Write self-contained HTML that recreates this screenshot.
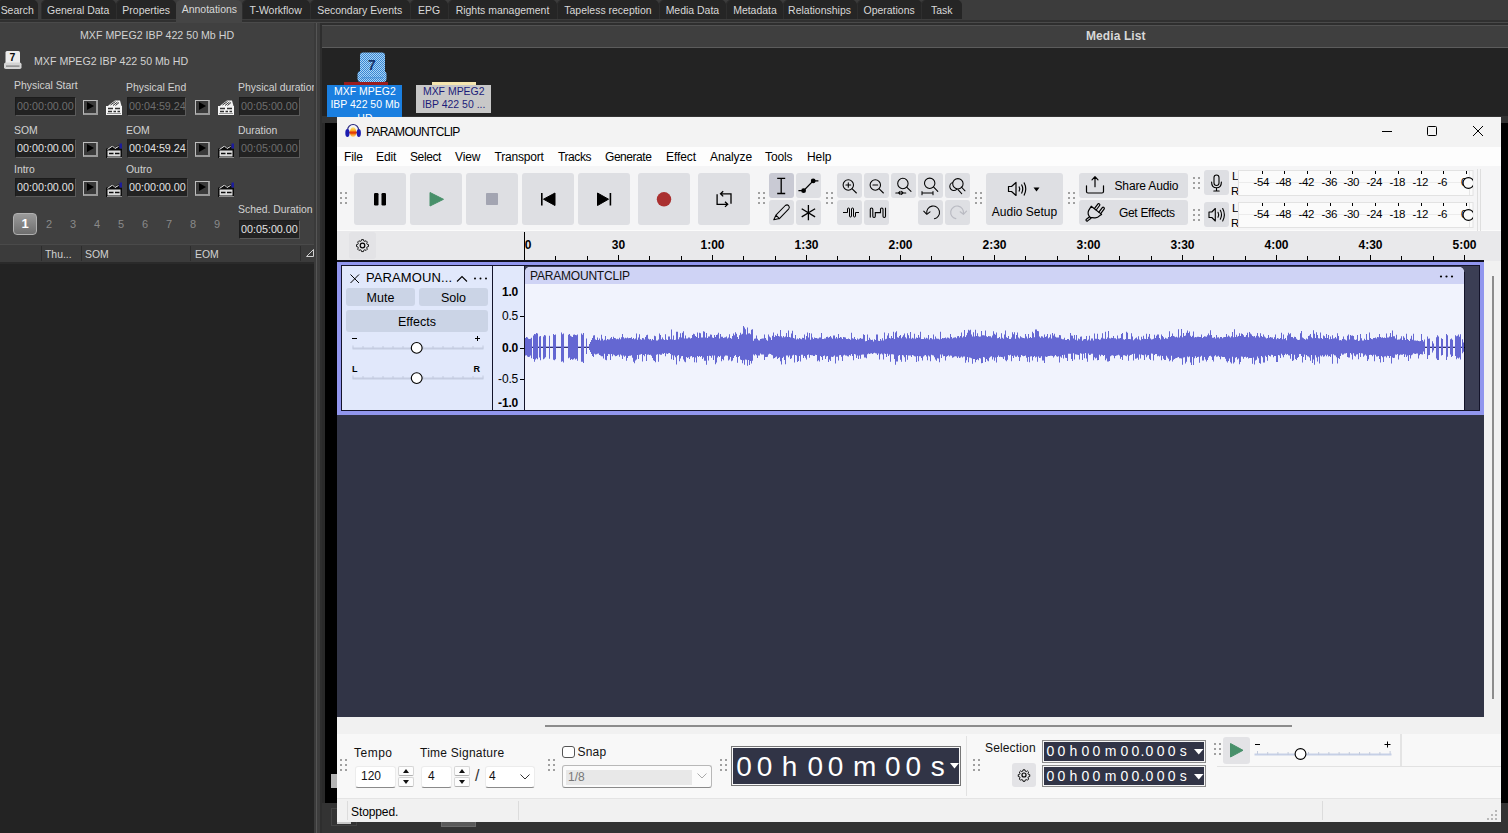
<!DOCTYPE html>
<html>
<head>
<meta charset="utf-8">
<title>PARAMOUNTCLIP</title>
<style>
*{box-sizing:border-box;margin:0;padding:0}
html,body{width:1508px;height:833px;overflow:hidden;background:#3f3f3f;font-family:"Liberation Sans",sans-serif;font-size:12px;color:#d6d6d6}
.abs{position:absolute}
#root{position:absolute;left:0;top:0;width:1508px;height:833px;overflow:hidden}
/* ---------- host app (dark) ---------- */
#tabbar{left:0;top:0;width:1508px;height:21px;background:#3c3c3c}
.tab{position:absolute;top:0;height:19px;background:#252525;border-radius:5px 5px 0 0;box-shadow:inset 1px 0 0 #2e2e2e;color:#d8d8d8;font-size:11.5px;line-height:20px;text-align:center;letter-spacing:0;white-space:nowrap}
.tab.sel{top:0;height:23px;background:#454545;line-height:19px;box-shadow:none}
#tabline{left:0;top:20px;width:1508px;height:3px;background:#303030;border-bottom:1px solid #4a4a4a}
#leftpanel{left:0;top:23px;width:316px;height:221px;background:#404040}
.lbl{position:absolute;font-size:11.5px;letter-spacing:0;transform:scaleX(.905);transform-origin:0 50%;color:#d2d2d2;white-space:nowrap;line-height:14px}
.tc{position:absolute;width:61px;height:19px;background:#222;border:1px solid #5a5a5a;border-top-color:#1c1c1c;border-left-color:#1c1c1c;color:#e2e2e2;font-size:11.5px;line-height:16px;letter-spacing:0;padding-left:1px;white-space:nowrap;overflow:hidden}
.tc.dis{color:#6e6e6e}
.pb{position:absolute;width:15px;height:15px;border:1.5px solid #bdbdbd;border-right:2px solid #999;border-bottom:2px solid #999;background:#3a3a3a}
.pb:after{content:"";position:absolute;left:2.5px;top:1.3px;border-left:7px solid #000;border-top:4.2px solid transparent;border-bottom:4.2px solid transparent}
.num{position:absolute;top:218px;font-size:11px;color:#8a8a8a;width:12px;text-align:center}
/* ---------- audacity window ---------- */
#win{left:337px;top:117px;width:1164px;height:705px;background:#f3f3f3;color:#000;overflow:hidden}
.seg{font-family:"Liberation Sans",sans-serif}
.menu{position:absolute;top:33px;font-size:12px;line-height:14px;color:#000;letter-spacing:-0.1px;white-space:nowrap}
.tbtn{position:absolute;background:#dedfe3;border-radius:3px}
.sbtn{position:absolute;background:#dedfe3;border-radius:3px;width:25px;height:25px}
.grip{position:absolute;width:2px;height:2px;background:#a0a0a0;box-shadow:5px 0 #a0a0a0,0 5px #a0a0a0,5px 5px #a0a0a0,0 10px #a0a0a0,5px 10px #a0a0a0}
.pbtn{background:#cbd4e6;border-radius:3px;text-align:center;font-size:12.5px;line-height:18px;color:#000}
.vr{left:155px;width:26px;text-align:right;font-size:12px;line-height:14px;letter-spacing:-0.2px;color:#000}
.vr.b{font-weight:bold}
.vr i{position:absolute;right:-6px;top:7px;width:4px;height:1px;background:#000}
.bl{font-size:12px;line-height:14px;color:#111;white-space:nowrap}
.inp{height:22px;background:#fff;border:1px solid #ececec;border-bottom-color:#8a8a8a;border-radius:3px;font-size:12px;line-height:19px;padding-left:5px;color:#111}
.spin{width:16px;height:22px}
.spin i,.spin b{position:absolute;left:0;width:16px;height:10px;border:1px solid #d6d6d6;border-bottom-color:#b0b0b0;background:#fdfdfd;border-radius:2px}
.spin i{top:0}.spin b{top:11px}
.spin i:after{content:"";position:absolute;left:4px;top:2px;border-left:3.5px solid transparent;border-right:3.5px solid transparent;border-bottom:4px solid #111}
.spin b:after{content:"";position:absolute;left:4px;top:2px;border-left:3.5px solid transparent;border-right:3.5px solid transparent;border-top:4px solid #111}
.selt{width:163px;height:22px;background:#313446;border:1px solid #111;outline:1px solid #fff;color:#fff;font-size:14px;line-height:20px;letter-spacing:3.1px;padding-left:4px;white-space:nowrap}
.sc{display:inline-block;transform:scaleX(.91);transform-origin:50% 50%}
.sl{display:inline-block;transform:scaleX(.935);transform-origin:0 50%}
.bigt span{position:absolute;top:0;width:30px;text-align:center;font-size:28px;line-height:37px;color:#fff}
.selo{width:164px;height:22.500px;border:1px solid #8c8c8c;background:#f6f6f6;padding:1px}
.seli{position:relative;width:160px;height:18.500px;background:#313446}
.seli span{position:absolute;top:0;width:16px;text-align:center;font-size:14px;line-height:19.500px;color:#fff}
</style>
</head>
<body>
<div id="root">
<!--HOST-->
<svg width="0" height="0" style="position:absolute"><defs><g id="clap"><path d="M0 6H16V15H0Z" fill="#f4f4f4"/><path d="M3 5L9 0.500H14L15.500 6H2Z" fill="#f4f4f4"/><path d="M4.500 5L9.500 1.500M7 5.500L11.500 2M9.500 5.500L13 2.500" stroke="#333" stroke-width="1"/><path d="M2 8.500H7M9 8.500H14M2 11.500H6M7.500 11.500H10M11.500 11.500H14" stroke="#333" stroke-width="1.300"/><path d="M1 13.500H15" stroke="#999" stroke-width="1"/></g><g id="clap2"><path d="M0 6.500H3L6.500 3L9 5.500L12 3.500H13.500V6.500H16V16H0Z" fill="#0c0c0c"/><rect x="1.500" y="8.500" width="13" height="6" fill="#dcdcdc"/><path d="M3 11.500H7.500M9 11.500H13.500" stroke="#0c0c0c" stroke-width="1.600"/><path d="M1.500 7.500L6.500 4L9 6.500L12.500 4.500" stroke="#e8e8e8" stroke-width="1" fill="none"/><rect x="13.500" y="1.500" width="2.500" height="5" fill="#1c1c9c"/><path d="M1 15.500H16" stroke="#8a8a8a"/></g></defs></svg>
<div class="abs" id="tabbar"></div>
<div class="tab" style="left:-3px;width:41px"><span class="sc">Search</span></div>
<div class="tab" style="left:41px;width:75px"><span class="sc">General Data</span></div>
<div class="tab" style="left:116px;width:60px"><span class="sc">Properties</span></div>
<div class="tab" style="left:242px;width:68px"><span class="sc">T-Workflow</span></div>
<div class="tab" style="left:310px;width:100px"><span class="sc">Secondary Events</span></div>
<div class="tab" style="left:410px;width:38px"><span class="sc">EPG</span></div>
<div class="tab" style="left:448px;width:109px"><span class="sc">Rights management</span></div>
<div class="tab" style="left:557px;width:102px"><span class="sc">Tapeless reception</span></div>
<div class="tab" style="left:659px;width:67px"><span class="sc">Media Data</span></div>
<div class="tab" style="left:726px;width:57px"><span class="sc">Metadata</span></div>
<div class="tab" style="left:783px;width:74px"><span class="sc">Relationships</span></div>
<div class="tab" style="left:857px;width:65px"><span class="sc">Operations</span></div>
<div class="tab" style="left:921px;width:41px"><span class="sc">Task</span></div>
<div class="abs" id="tabline"></div>
<div class="tab sel" style="left:176px;width:66px"><span class="sc">Annotations</span></div>

<div class="abs" id="leftpanel"></div>
<div class="lbl" style="left:79.500px;top:28px;transform:scaleX(.925)">MXF MPEG2 IBP 422 50 Mb HD</div>
<!-- small 7 icon -->
<svg class="abs" style="left:3px;top:50px" width="20" height="20" viewBox="0 0 20 20"><rect x="2.500" y="1" width="14.500" height="13" rx="1.500" fill="#ececec"/><rect x="1" y="12.500" width="17.500" height="6.500" rx="1.800" fill="#d4d4d4"/><rect x="3" y="15.500" width="13.500" height="1.200" fill="#7a7a7a"/><text x="9.500" y="11.200" font-family="Liberation Sans, sans-serif" font-size="10.500" font-weight="bold" text-anchor="middle" fill="#0a0a0a">7</text></svg>
<div class="lbl" style="left:34px;top:54px;transform:scaleX(.925)">MXF MPEG2 IBP 422 50 Mb HD</div>

<div class="lbl" style="left:14px;top:78px">Physical Start</div>
<div class="lbl" style="left:126px;top:80px">Physical End</div>
<div class="lbl" style="left:238px;top:80px">Physical duration</div>
<div class="tc dis" style="left:15px;top:97px"><span class="sl">00:00:00.00</span></div><div class="pb" style="left:83px;top:100px"></div><svg class="abs" style="left:106px;top:100px" width="16" height="16"><use href="#clap"/></svg>
<div class="tc dis" style="left:127px;top:97px;width:59px"><span class="sl">00:04:59.24</span></div><div class="pb" style="left:195px;top:100px"></div><svg class="abs" style="left:218px;top:100px" width="16" height="16"><use href="#clap"/></svg>
<div class="tc dis" style="left:239px;top:97px"><span class="sl">00:05:00.00</span></div>

<div class="lbl" style="left:14px;top:123px">SOM</div>
<div class="lbl" style="left:126px;top:123px">EOM</div>
<div class="lbl" style="left:238px;top:123px">Duration</div>
<div class="tc" style="left:15px;top:139px"><span class="sl">00:00:00.00</span></div><div class="pb" style="left:83px;top:142px"></div><svg class="abs" style="left:106px;top:142px" width="16" height="16"><use href="#clap2"/></svg>
<div class="tc" style="left:127px;top:139px"><span class="sl">00:04:59.24</span></div><div class="pb" style="left:195px;top:142px"></div><svg class="abs" style="left:218px;top:142px" width="16" height="16"><use href="#clap2"/></svg>
<div class="tc dis" style="left:239px;top:139px"><span class="sl">00:05:00.00</span></div>

<div class="lbl" style="left:14px;top:162px">Intro</div>
<div class="lbl" style="left:126px;top:162px">Outro</div>
<div class="tc" style="left:15px;top:178px"><span class="sl">00:00:00.00</span></div><div class="pb" style="left:83px;top:181px"></div><svg class="abs" style="left:106px;top:181px" width="16" height="16"><use href="#clap2"/></svg>
<div class="tc" style="left:127px;top:178px"><span class="sl">00:00:00.00</span></div><div class="pb" style="left:195px;top:181px"></div><svg class="abs" style="left:218px;top:181px" width="16" height="16"><use href="#clap2"/></svg>

<div class="lbl" style="left:238px;top:202px">Sched. Duration</div>
<div class="tc" style="left:239px;top:220px"><span class="sl">00:05:00.00</span></div>

<div class="abs" style="left:13px;top:213px;width:24px;height:22px;border-radius:4px;background:linear-gradient(#9a9a9a,#6e6e6e);border:1px solid #b0b0b0;color:#fff;font-weight:bold;font-size:13px;text-align:center;line-height:20px">1</div>
<div class="num" style="left:43px">2</div><div class="num" style="left:67px">3</div><div class="num" style="left:91px">4</div><div class="num" style="left:115px">5</div><div class="num" style="left:139px">6</div><div class="num" style="left:163px">7</div><div class="num" style="left:187px">8</div><div class="num" style="left:211px">9</div>

<!-- list header -->
<div class="abs" style="left:0;top:244px;width:316px;height:20px;background:#3b3b3b;border-top:1px solid #4a4a4a;border-bottom:2px solid #2a2a2a"></div>
<div class="abs" style="left:41px;top:246px;width:1px;height:15px;background:#2c2c2c"></div>
<div class="abs" style="left:81px;top:246px;width:1px;height:15px;background:#2c2c2c"></div>
<div class="abs" style="left:190px;top:246px;width:1px;height:15px;background:#2c2c2c"></div>
<div class="abs" style="left:300px;top:246px;width:1px;height:15px;background:#2c2c2c"></div>
<svg class="abs" style="left:306px;top:248px" width="9" height="10" fill="none" stroke="#cfcfcf" stroke-width="1"><path d="M0.500 8.500L7.500 1.500V8.500Z"/></svg>
<div class="lbl" style="left:45px;top:247px">Thu...</div>
<div class="lbl" style="left:85px;top:247px">SOM</div>
<div class="lbl" style="left:195px;top:247px">EOM</div>
<div class="abs" style="left:0;top:264px;width:316px;height:569px;background:#232323"></div>
<!-- divider -->
<div class="abs" style="left:314px;top:23px;width:8px;height:810px;background:#3d3d3d;border-left:2px solid #3a3a3a;border-right:2px solid #2e2e2e"></div><div class="abs" style="left:316px;top:23px;width:1px;height:810px;background:#555"></div>

<!-- media list -->
<div class="abs" style="left:322px;top:23px;width:1186px;height:2px;background:#2e2e2e"></div><div class="abs" style="left:322px;top:25px;width:1186px;height:23px;background:#3f3f3f;border-top:1px solid #525252;border-bottom:1px solid #5c5c5c"></div>
<div class="abs" style="left:1086px;top:29px;font-size:12px;font-weight:bold;color:#d8d8d8;letter-spacing:0.1px;line-height:14px">Media List</div>
<div class="abs" style="left:322px;top:48px;width:1186px;height:785px;background:#232323"></div>
<div class="abs" style="left:322px;top:116px;width:1186px;height:7px;background:#333"></div>
<div class="abs" style="left:322px;top:123px;width:1186px;height:680px;background:#000"></div>
<div class="abs" style="left:322px;top:803px;width:1186px;height:30px;background:#333"></div>

<div class="abs" style="left:441px;top:818px;width:35px;height:9px;background:#5a5a5a;border:1px solid #6a6a6a"></div>
<div class="abs" style="left:322px;top:123px;width:3px;height:680px;background:#2a2a2a"></div>
<div class="abs" style="left:331px;top:774px;width:6px;height:14px;background:#b4b4b4"></div>
<div class="abs" style="left:331px;top:808px;width:26px;height:18px;border:1px solid #444"></div>
<div class="abs" style="left:337px;top:822px;width:14px;height:2px;background:#c8c8c8"></div>
<!-- media items -->
<svg class="abs" style="left:356px;top:52px" width="32" height="31" viewBox="0 0 32 31">
<defs><pattern id="dth" width="2" height="2" patternUnits="userSpaceOnUse"><rect width="2" height="2" fill="#a8d4f6"/><rect width="1" height="1" fill="#3a86d2"/><rect x="1" y="1" width="1" height="1" fill="#3a86d2"/></pattern></defs>
<rect x="4" y="0.500" width="25" height="22" rx="3" fill="url(#dth)"/><rect x="1.500" y="19" width="29" height="11" rx="3.500" fill="url(#dth)"/><rect x="5" y="25" width="22" height="1.500" fill="#3a86d2" opacity=".5"/>
<text x="16" y="18" font-family="Liberation Sans, sans-serif" font-size="14" font-weight="bold" text-anchor="middle" fill="#15356c">7</text></svg>
<div class="abs" style="left:344px;top:82px;width:44px;height:3px;background:#9a1c1c"></div>
<div class="abs" style="left:327px;top:85px;width:75px;height:32px;background:#1a7fe0;color:#fff;font-size:11.5px;line-height:13.4px;text-align:center;overflow:hidden;white-space:nowrap"><span class="sc">MXF MPEG2<br>IBP 422 50 Mb<br>HD</span></div>
<div class="abs" style="left:432px;top:82px;width:44px;height:3px;background:#f5e6b0"></div>
<div class="abs" style="left:416px;top:85px;width:75px;height:28px;background:#c8c8c8;color:#1c1c78;font-size:11.5px;line-height:13.4px;text-align:center;overflow:hidden;white-space:nowrap"><span class="sc">MXF MPEG2<br>IBP 422 50 ...</span></div>
<!--/HOST-->
<!--WIN-->
<div class="abs" id="win">
<!-- title bar -->
<div class="abs" style="left:0;top:0;width:1164px;height:30px;background:#f3f3f3"></div>
<svg class="abs" style="left:8px;top:6px" width="17" height="15" viewBox="0 0 17 15">
<defs><linearGradient id="aw" x1="0" y1="0" x2="0" y2="1"><stop offset="0" stop-color="#fbe67a"/><stop offset="0.35" stop-color="#f9a825"/><stop offset="0.55" stop-color="#e23c0c"/><stop offset="0.72" stop-color="#f58a1c"/><stop offset="1" stop-color="#fbe9a0"/></linearGradient></defs>
<path d="M2.600 8.500V7A5.500 5.500 0 0 1 13.600 7V8.500" fill="none" stroke="#23237c" stroke-width="1.200"/>
<ellipse cx="8.100" cy="9.200" rx="3.200" ry="4.900" fill="url(#aw)"/><rect x="4" y="8.700" width="8.200" height="1.700" fill="#e23c0c"/>
<ellipse cx="2.400" cy="9.900" rx="2.100" ry="4" fill="#1c1cb0"/><ellipse cx="13.800" cy="9.900" rx="2.100" ry="4" fill="#1c1cb0"/>
</svg>
<div class="abs" style="left:29px;top:8px;font-size:12px;line-height:14px;letter-spacing:-0.68px;color:#000">PARAMOUNTCLIP</div>
<svg class="abs" style="left:1040px;top:7.300px" width="120" height="14" viewBox="0 0 120 14" fill="none" stroke="#000" stroke-width="1"><path d="M5 7.5H15"/><rect x="50.5" y="2.5" width="9" height="9" rx="1"/><path d="M96 2 L106 12 M106 2 L96 12"/></svg>
<!-- menu bar -->
<div class="abs" style="left:0;top:30px;width:1164px;height:19px;background:#fdfdfd"></div>
<div class="menu" style="left:7px">File</div>
<div class="menu" style="left:39px">Edit</div>
<div class="menu" style="left:73px;letter-spacing:-0.4px">Select</div>
<div class="menu" style="left:118px">View</div>
<div class="menu" style="left:157.500px;letter-spacing:-0.2px">Transport</div>
<div class="menu" style="left:221px;letter-spacing:-0.4px">Tracks</div>
<div class="menu" style="left:268px;letter-spacing:-0.45px">Generate</div>
<div class="menu" style="left:329px">Effect</div>
<div class="menu" style="left:373px">Analyze</div>
<div class="menu" style="left:428px">Tools</div>
<div class="menu" style="left:470px">Help</div>
<!-- toolbar -->
<div class="abs" style="left:0;top:49px;width:1164px;height:64px;background:#f5f5f6"></div>
<div class="abs" style="left:0;top:113px;width:1164px;height:1px;background:#fbfbfb"></div>
<div class="grip" style="left:2.500px;top:75px"></div>
<div class="tbtn" style="left:17px;top:56px;width:52px;height:52px"><svg width="52" height="52"><rect x="20" y="20" width="4.5" height="12.5" rx="1.2" fill="#000"/><rect x="27.5" y="20" width="4.5" height="12.5" rx="1.2" fill="#000"/></svg></div>
<div class="tbtn" style="left:73px;top:56px;width:52px;height:52px"><svg width="52" height="52"><path d="M20 19.5 L33.5 26.3 L20 33 Z" fill="#48906a" stroke="#48906a" stroke-width="1" stroke-linejoin="round"/></svg></div>
<div class="tbtn" style="left:129px;top:56px;width:52px;height:52px"><svg width="52" height="52"><rect x="20" y="20" width="12" height="12" rx="0.8" fill="#a3a5b2"/></svg></div>
<div class="tbtn" style="left:185px;top:56px;width:52px;height:52px"><svg width="52" height="52"><rect x="19" y="20" width="1.6" height="12.5" fill="#000"/><path d="M33 20 V32.5 L21.5 26.2 Z" fill="#000" stroke="#000" stroke-width="1" stroke-linejoin="round"/></svg></div>
<div class="tbtn" style="left:241px;top:56px;width:52px;height:52px"><svg width="52" height="52"><rect x="31.6" y="20" width="1.6" height="12.5" fill="#000"/><path d="M19.5 20 V32.5 L30.5 26.2 Z" fill="#000" stroke="#000" stroke-width="1" stroke-linejoin="round"/></svg></div>
<div class="tbtn" style="left:301px;top:56px;width:52px;height:52px"><svg width="52" height="52"><circle cx="26" cy="26.3" r="7.2" fill="#aa3030"/></svg></div>
<div class="tbtn" style="left:361px;top:56px;width:52px;height:52px"><svg width="52" height="52" fill="none" stroke="#000" stroke-width="1.3"><path d="M33 30.800V20.800H22.600M25.200 18.200L22.500 20.800L25.200 23.400"/><path d="M19.100 21.300V31.300H29.500M27 28.700L29.700 31.300L27 33.900"/></svg></div>
<div class="grip" style="left:421px;top:75px"></div>
<!-- tools -->
<div class="sbtn" style="left:432px;top:56px;background:#c9cad4"><svg width="25" height="25" fill="none" stroke="#000" stroke-width="1.3"><path d="M8.200 5.300H16.200M8.200 20.500H16.200M12.200 5.300V20.500"/></svg></div>
<div class="sbtn" style="left:459px;top:56px"><svg width="25" height="25" fill="none" stroke="#000" stroke-width="1.3"><path d="M2.400 17.700H7.600L17.200 7.900H22.400"/><circle cx="7.600" cy="17.700" r="2.400" fill="#000" stroke="none"/><circle cx="17.200" cy="7.900" r="2.400" fill="#000" stroke="none"/></svg></div>
<div class="sbtn" style="left:432px;top:83px"><svg width="25" height="25" fill="none" stroke="#000" stroke-width="1.05" stroke-linecap="round" stroke-linejoin="round"><path d="M4.800 19.800L6.900 15.200L16.300 5.500Q18.200 4.200 19.600 5.600Q21 7.200 19.800 8.800L10.400 18.600ZM6.900 15.200L10.400 18.600"/></svg></div>
<div class="sbtn" style="left:459px;top:83px"><svg width="25" height="25" fill="none" stroke="#000" stroke-width="1.3"><path d="M12.400 5V20.200M5.700 8.800L19.100 16.900M19.100 8.800L5.700 16.900"/></svg></div>
<div class="grip" style="left:489px;top:75px"></div>
<!-- zoom -->
<div class="sbtn" style="left:500px;top:56px"><svg width="25" height="25" fill="none" stroke="#000" stroke-width="1.05" stroke-linecap="round" stroke-linejoin="round"><circle cx="11.300" cy="12" r="5.200"/><path d="M15.200 15.900L19.400 20M8.900 12H13.700M11.300 9.800V14.200"/></svg></div>
<div class="sbtn" style="left:527px;top:56px"><svg width="25" height="25" fill="none" stroke="#000" stroke-width="1.05" stroke-linecap="round" stroke-linejoin="round"><circle cx="11.300" cy="12" r="5.200"/><path d="M15.200 15.900L19.400 20M8.900 12H13.700"/></svg></div>
<div class="sbtn" style="left:554px;top:56px"><svg width="25" height="25" fill="none" stroke="#000" stroke-width="1.05" stroke-linecap="round" stroke-linejoin="round"><circle cx="11.900" cy="10.500" r="5.200"/><path d="M15.900 14.300L20 18.400M4.800 19.900H14.800M7.300 19.900l1.800-1.500M7.300 19.900l1.800 1.500M12.300 19.900l-1.800-1.500M12.300 19.900l-1.800 1.500"/></svg></div>
<div class="sbtn" style="left:581px;top:56px"><svg width="25" height="25" fill="none" stroke="#000" stroke-width="1.05" stroke-linecap="round" stroke-linejoin="round"><circle cx="11.700" cy="10.300" r="5.200"/><path d="M15.700 14.100L19.800 18.400M4 20H15M4 18.400V21.700M15 18.400V21.700"/></svg></div>
<div class="sbtn" style="left:608px;top:56px"><svg width="25" height="25" fill="none" stroke="#000" stroke-width="1.05" stroke-linecap="round" stroke-linejoin="round"><circle cx="8.800" cy="13.500" r="4"/><circle cx="12.900" cy="10.800" r="5.200" fill="#dedfe3"/><path d="M16.400 14L20 17.800M13 16.600L16.700 20.600"/></svg></div>
<div class="sbtn" style="left:500px;top:83px"><svg width="25" height="25" fill="none" stroke="#000" stroke-width="1"><path d="M6 12.500H10.500V9A1 1 0 0 1 12.500 9V16A1 1 0 0 0 14.500 16V9A1 1 0 0 1 16.500 9V16A1 1 0 0 0 18.500 16V12.500H22"/></svg></div>
<div class="sbtn" style="left:527px;top:83px"><svg width="25" height="25" fill="none" stroke="#000" stroke-width="1.1"><path d="M6.300 17.400V9.200A1.250 1.250 0 0 1 8.800 9.200V16.200A1.250 1.250 0 0 0 11.300 16.200V12.600H16.500V9.200A1.250 1.250 0 0 1 19 9.200V16.200A1.250 1.250 0 0 0 21.500 16.200V7.800"/></svg></div>
<div class="sbtn" style="left:581px;top:83px"><svg width="25" height="25" fill="none" stroke="#000" stroke-width="1.05" stroke-linecap="round" stroke-linejoin="round"><path d="M8.800 13.500A6.400 6.400 0 1 1 16.400 18.700"/><path d="M5.700 11.200L8.800 14.300L12 11.800"/></svg></div>
<div class="sbtn" style="left:608px;top:83px"><svg width="25" height="25" fill="none" stroke="#b9bac2" stroke-width="1.2" stroke-linecap="round" stroke-linejoin="round"><path d="M18.400 13.500A6.400 6.400 0 1 0 10.800 18.700"/><path d="M21.500 11.200L18.400 14.300L15.200 11.800"/></svg></div>
<div class="grip" style="left:638px;top:75px"></div>
<!-- audio setup -->
<div class="tbtn" style="left:649px;top:56px;width:77px;height:52px"><svg class="abs" style="left:20px;top:5px" width="40" height="22" fill="none" stroke="#000" stroke-width="1.2" stroke-linejoin="round"><path d="M2.5 8.5H5.5L10 4.5V17.5L5.5 13.5H2.5Z"/><path d="M13 8.5Q14.5 11 13 13.5M15.5 6.5Q18 11 15.5 15.5M18 4.5Q21.5 11 18 17.5"/><path d="M27.5 9.5H33.5L30.5 13.5Z" fill="#000" stroke="none"/></svg><div class="abs" style="left:0;top:31.500px;width:77px;text-align:center;font-size:12px;line-height:14px;letter-spacing:0px">Audio Setup</div></div>
<div class="grip" style="left:731px;top:75px"></div>
<!-- share / effects -->
<div class="tbtn" style="left:742px;top:56px;width:109px;height:25px"><svg class="abs" style="left:0;top:0" width="32" height="25" fill="none" stroke="#000" stroke-width="1.2" stroke-linecap="round" stroke-linejoin="round"><path d="M7.500 12.800V18.500Q7.500 20 9 20H23Q24.500 20 24.500 18.500V12.800M16 13.700V4M13 6.800L16 3.700L19 6.800"/></svg><div class="abs" style="left:35.500px;top:5.500px;font-size:12px;line-height:14px;white-space:nowrap;letter-spacing:-0.15px">Share Audio</div></div>
<div class="tbtn" style="left:742px;top:83px;width:109px;height:25px"><svg class="abs" style="left:0;top:0" width="32" height="25" fill="none" stroke="#000" stroke-width="1.2" stroke-linecap="round" stroke-linejoin="round"><path d="M12.200 6.200L22.600 14.400L20.800 15.600Q18.500 18.300 15.200 17.800L11.200 17.400Q8 14.500 9.600 10.600Z"/><path d="M15.400 8.600L18.800 4.100A1.100 1.100 0 0 1 20.600 5.500L17.200 10"/><path d="M19.900 12.200L23.300 7.700A1.100 1.100 0 0 1 25.100 9.100L21.700 13.600"/><path d="M10.600 16.800L7.400 19.300A1 1 0 0 0 8.600 20.900L12 18.200"/></svg><div class="abs" style="left:40px;top:5.500px;font-size:12px;line-height:14px;white-space:nowrap;letter-spacing:-0.32px">Get Effects</div></div>
<div class="grip" style="left:856px;top:60px"></div>
<div class="grip" style="left:856px;top:92px"></div>
<!-- meters -->
<div class="sbtn" style="left:867px;top:53px"><svg width="25" height="25" fill="none" stroke="#000" stroke-width="1.1" stroke-linecap="round"><rect x="10" y="5" width="5" height="10.500" rx="2.500"/><path d="M7.600 12Q7.600 17.800 12.500 17.800Q17.400 17.800 17.400 12M12.500 17.800V21M9.800 21H15.200"/></svg></div>
<div class="sbtn" style="left:867px;top:85px"><svg width="25" height="25" fill="none" stroke="#000" stroke-width="1.1" stroke-linejoin="round" stroke-linecap="round"><path d="M5 10H7.800L11.300 6.500V19L7.800 15.500H5Z"/><path d="M14 10.300Q15.300 12.700 14 15.200M16.300 8.300Q18.700 12.700 16.300 17.200M18.700 6.500Q22 12.700 18.700 19"/></svg></div>
<div class="abs" style="left:895px;top:53px;font-size:11.500px;line-height:12px">L</div><div class="abs" style="left:894px;top:67.500px;font-size:11.500px;line-height:12px">R</div>
<div class="abs" style="left:895px;top:85px;font-size:11.500px;line-height:12px">L</div><div class="abs" style="left:894px;top:99.500px;font-size:11.500px;line-height:12px">R</div>
<svg class="abs" style="left:900px;top:52px" width="250" height="62" font-family="Liberation Sans, sans-serif" font-size="11.500" fill="#000">
<defs><clipPath id="mclip"><rect x="0" y="0" width="236" height="30"/></clipPath></defs>
<path d="M240.500 0V62M243.500 0V62" stroke="#dedede"/>
<g id="mtr"><rect x="1.500" y="1.500" width="234.500" height="25" fill="#fbfbfb" stroke="#e2e2e2"/><path d="M2 13.500H236" stroke="#ececec"/><path d="M232.500 2V26" stroke="#e6e6e6"/>
<path d="M25.5 2V5M47.5 2V5M70.5 2V5M93.5 2V5M115.5 2V5M138.5 2V5M161.5 2V5M184.5 2V5M206.5 2V5M229.5 2V5" stroke="#000" stroke-width="1"/>
<g text-anchor="middle" letter-spacing="-0.4"><text x="24.2" y="17">-54</text><text x="46.2" y="17">-48</text><text x="69.2" y="17">-42</text><text x="92.2" y="17">-36</text><text x="114.2" y="17">-30</text><text x="137.2" y="17">-24</text><text x="160.2" y="17">-18</text><text x="183.2" y="17">-12</text><text x="205.2" y="17">-6</text><text x="227" y="17">0</text></g>
<circle cx="231.400" cy="14" r="5.400" fill="#fafafa" stroke="#000" stroke-width="1.200" clip-path="url(#mclip)"/></g>
<use href="#mtr" y="32"/>
</svg>
<!-- ruler -->
<div class="abs" style="left:0;top:114px;width:1164px;height:30px;background:#e9e9eb"></div>
<div class="abs" style="left:11.500px;top:114.500px;width:27px;height:27px;border-radius:3px;background:#e3e3e6"><svg width="27" height="27" viewBox="0 0 27 27" fill="none" stroke="#000" stroke-width="1.2" stroke-linejoin="round"><circle cx="13.5" cy="13.5" r="2.3"/><path d="M12.2 7h2.600l.4 1.800 1.500.7 1.600-1 1.800 1.800-1 1.600.7 1.500 1.800.4v2.600l-1.800.4-.7 1.500 1 1.600-1.800 1.800-1.600-1-1.500.7-.4 1.800h-2.600l-.4-1.800-1.500-.7-1.600 1-1.800-1.800 1-1.600-.7-1.500-1.800-.4v-2.600l1.800-.4.7-1.500-1-1.600 1.800-1.800 1.600 1 1.500-.7z" transform="translate(13.500 13) scale(0.74) translate(-13.500 -14.300)"/></svg></div>
<svg class="abs" style="left:0;top:114px" width="1164" height="30" font-family="Liberation Sans, sans-serif" font-size="12" font-weight="bold" fill="#000"><path d="M187.5 1V29M218.5 25V29M250.5 25V29M281.5 24V29M312.5 25V29M344.5 25V29M375.5 24V29M406.5 25V29M438.5 25V29M469.5 24V29M500.5 25V29M532.5 25V29M563.5 24V29M594.5 25V29M626.5 25V29M657.5 24V29M688.5 25V29M720.5 25V29M751.5 24V29M782.5 25V29M814.5 25V29M845.5 24V29M876.5 25V29M908.5 25V29M939.5 24V29M970.5 25V29M1002.5 25V29M1033.5 24V29M1064.5 25V29M1096.5 25V29M1127.5 24V29" stroke="#000" stroke-width="1" fill="none"/><text x="187.800" y="17.800" text-anchor="start">0</text><text x="281.5" y="17.800" text-anchor="middle">30</text><text x="375.5" y="17.800" text-anchor="middle">1:00</text><text x="469.5" y="17.800" text-anchor="middle">1:30</text><text x="563.5" y="17.800" text-anchor="middle">2:00</text><text x="657.5" y="17.800" text-anchor="middle">2:30</text><text x="751.5" y="17.800" text-anchor="middle">3:00</text><text x="845.5" y="17.800" text-anchor="middle">3:30</text><text x="939.5" y="17.800" text-anchor="middle">4:00</text><text x="1033.5" y="17.800" text-anchor="middle">4:30</text><text x="1127.5" y="17.800" text-anchor="middle">5:00</text></svg>
<div class="abs" style="left:0;top:143px;width:1147px;height:2px;background:#10101c"></div>
<!-- track area -->
<div class="abs" style="left:0;top:145px;width:1147px;height:455px;background:#313446"></div>
<div class="abs" style="left:1147px;top:144px;width:17px;height:456px;background:#f1f1f1"></div>
<div class="abs" style="left:1155px;top:159px;width:2px;height:423px;background:#8c8c8c"></div>
<!-- track -->
<div class="abs" style="left:0;top:145px;width:1147px;height:152.500px;background:#9196ee"></div>
<div class="abs" style="left:4px;top:148px;width:1139px;height:146px;background:#14142a"></div>
<div class="abs" style="left:5px;top:149px;width:150px;height:144px;background:#e1e8fb"></div>
<div class="abs" style="left:156px;top:149px;width:31px;height:144px;background:#e1e8fb"></div>
<div class="abs" style="left:188px;top:149px;width:954px;height:144px;background:#3b3e54"></div>
<!-- clip -->
<div class="abs" style="left:188px;top:149.500px;width:939px;height:143.500px;background:#f1f3fd;border-radius:5px 5px 0 0;overflow:hidden"><div class="abs" style="left:0;top:0;width:939px;height:17.500px;background:#cfd3f5"></div></div>
<div class="abs" style="left:1126.500px;top:155px;width:1px;height:138px;background:#14142a"></div>
<div class="abs" style="left:193px;top:152px;font-size:12px;line-height:14px;letter-spacing:-0.2px;color:#111">PARAMOUNTCLIP</div>
<svg class="abs" style="left:1102px;top:157px" width="16" height="5"><circle cx="2" cy="2.5" r="1.1" fill="#000"/><circle cx="7.500" cy="2.5" r="1.1" fill="#000"/><circle cx="13" cy="2.5" r="1.1" fill="#000"/></svg>
<svg class="abs" style="left:188px;top:200px" width="940" height="60" viewBox="0 -30 940 60"><path d="M-2 0.500H940" stroke="#000" stroke-width="1"/><path d="M0 -9.0H1L1 -10.0H2L2 -9.6H3L3 -8.2H4L4 -8.1H5L5 -8.2H6L6 -9.3H7L7 -0.5H8L8 -11.4H9L9 -12.9H10L10 -12.7H11L11 -13.9H12L12 -13.6H13L13 -0.5H14L14 -10.4H15L15 -10.9H16L16 -0.5H17L17 -0.5H18L18 -10.5H19L19 -11.9H20L20 -11.6H21L21 -0.5H22L22 -0.5H23L23 -0.5H24L24 -11.2H25L25 -0.5H26L26 -0.5H27L27 -0.5H28L28 -13.0H29L29 -11.9H30L30 -12.4H31L31 -0.5H32L32 -0.5H33L33 -0.5H34L34 -0.5H35L35 -0.5H36L36 -14.4H37L37 -12.7H38L38 -13.6H39L39 -0.5H40L40 -0.5H41L41 -0.5H42L42 -0.5H43L43 -12.2H44L44 -12.9H45L45 -11.3H46L46 -10.5H47L47 -10.1H48L48 -12.3H49L49 -12.6H50L50 -12.1H51L51 -11.7H52L52 -12.5H53L53 -0.5H54L54 -0.5H55L55 -0.5H56L56 -13.4H57L57 -12.2H58L58 -13.9H59L59 -0.5H60L60 -0.5H61L61 -8.5H62L62 -0.5H63L63 -0.5H64L64 -3.0H65L65 -5.0H66L66 -7.0H67L67 -9.0H68L68 -11.4H69L69 -11.8H70L70 -7.4H71L71 -7.0H72L72 -9.5H73L73 -7.0H74L74 -8.5H75L75 -6.5H76L76 -12.3H77L77 -8.3H78L78 -6.5H79L79 -7.3H80L80 -11.1H81L81 -6.7H82L82 -7.9H83L83 -7.6H84L84 -7.6H85L85 -8.7H86L86 -9.9H87L87 -8.0H88L88 -10.2H89L89 -9.1H90L90 -8.7H91L91 -7.7H92L92 -8.2H93L93 -7.7H94L94 -9.3H95L95 -7.8H96L96 -9.7H97L97 -12.9H98L98 -9.7H99L99 -8.6H100L100 -9.2H101L101 -8.7H102L102 -9.5H103L103 -8.8H104L104 -9.1H105L105 -8.9H106L106 -9.8H107L107 -7.9H108L108 -9.1H109L109 -7.8H110L110 -8.5H111L111 -13.6H112L112 -7.3H113L113 -9.5H114L114 -12.8H115L115 -7.7H116L116 -7.2H117L117 -9.1H118L118 -8.8H119L119 -7.4H120L120 -10.0H121L121 -11.7H122L122 -12.3H123L123 -8.3H124L124 -7.5H125L125 -7.9H126L126 -6.5H127L127 -8.1H128L128 -7.1H129L129 -11.3H130L130 -10.8H131L131 -6.5H132L132 -6.4H133L133 -7.5H134L134 -13.6H135L135 -11.9H136L136 -7.7H137L137 -9.6H138L138 -7.8H139L139 -7.0H140L140 -12.7H141L141 -7.6H142L142 -6.9H143L143 -10.4H144L144 -10.4H145L145 -7.7H146L146 -17.4H147L147 -7.4H148L148 -11.6H149L149 -6.9H150L150 -7.2H151L151 -15.2H152L152 -15.2H153L153 -7.7H154L154 -9.7H155L155 -13.7H156L156 -9.4H157L157 -14.3H158L158 -15.7H159L159 -8.4H160L160 -11.5H161L161 -8.4H162L162 -8.5H163L163 -9.5H164L164 -9.5H165L165 -8.6H166L166 -9.0H167L167 -12.1H168L168 -13.3H169L169 -12.7H170L170 -10.9H171L171 -10.0H172L172 -14.5H173L173 -9.0H174L174 -14.3H175L175 -13.7H176L176 -9.6H177L177 -9.5H178L178 -15.7H179L179 -15.3H180L180 -9.5H181L181 -14.0H182L182 -8.9H183L183 -10.4H184L184 -10.4H185L185 -12.4H186L186 -12.3H187L187 -9.5H188L188 -8.9H189L189 -12.0H190L190 -10.0H191L191 -11.9H192L192 -12.4H193L193 -14.2H194L194 -8.5H195L195 -12.9H196L196 -10.3H197L197 -10.2H198L198 -9.0H199L199 -9.4H200L200 -9.7H201L201 -10.6H202L202 -8.5H203L203 -9.6H204L204 -12.8H205L205 -9.1H206L206 -8.3H207L207 -10.9H208L208 -13.5H209L209 -11.7H210L210 -14.7H211L211 -13.2H212L212 -9.9H213L213 -8.0H214L214 -11.7H215L215 -14.3H216L216 -12.5H217L217 -13.3H218L218 -21.0H219L219 -19.4H220L220 -17.8H221L221 -12.5H222L222 -19.6H223L223 -13.6H224L224 -13.7H225L225 -12.7H226L226 -17.2H227L227 -17.8H228L228 -6.3H229L229 -8.2H230L230 -8.5H231L231 -11.4H232L232 -8.3H233L233 -6.7H234L234 -6.6H235L235 -8.0H236L236 -8.2H237L237 -8.5H238L238 -8.5H239L239 -12.6H240L240 -9.1H241L241 -7.2H242L242 -6.3H243L243 -12.5H244L244 -10.4H245L245 -9.6H246L246 -7.0H247L247 -11.2H248L248 -14.4H249L249 -10.1H250L250 -11.7H251L251 -11.1H252L252 -13.2H253L253 -11.0H254L254 -10.5H255L255 -16.9H256L256 -10.7H257L257 -9.4H258L258 -11.0H259L259 -9.7H260L260 -10.4H261L261 -14.1H262L262 -10.0H263L263 -16.4H264L264 -10.0H265L265 -9.4H266L266 -13.5H267L267 -16.2H268L268 -9.1H269L269 -8.4H270L270 -12.0H271L271 -7.5H272L272 -8.5H273L273 -7.8H274L274 -9.1H275L275 -8.2H276L276 -7.7H277L277 -9.2H278L278 -8.9H279L279 -12.6H280L280 -7.4H281L281 -11.1H282L282 -14.4H283L283 -9.4H284L284 -13.9H285L285 -7.3H286L286 -13.5H287L287 -9.4H288L288 -7.9H289L289 -9.4H290L290 -8.9H291L291 -9.0H292L292 -8.5H293L293 -8.5H294L294 -9.5H295L295 -9.4H296L296 -14.0H297L297 -8.1H298L298 -7.9H299L299 -8.6H300L300 -8.5H301L301 -9.9H302L302 -10.3H303L303 -9.2H304L304 -10.1H305L305 -11.0H306L306 -9.6H307L307 -8.3H308L308 -11.6H309L309 -11.5H310L310 -8.5H311L311 -9.9H312L312 -8.5H313L313 -12.9H314L314 -9.1H315L315 -9.9H316L316 -9.4H317L317 -8.0H318L318 -9.9H319L319 -9.7H320L320 -9.5H321L321 -8.0H322L322 -8.0H323L323 -8.4H324L324 -7.9H325L325 -7.2H326L326 -14.2H327L327 -8.7H328L328 -8.3H329L329 -10.1H330L330 -8.0H331L331 -7.0H332L332 -8.5H333L333 -7.6H334L334 -8.3H335L335 -9.1H336L336 -8.2H337L337 -8.2H338L338 -12.8H339L339 -11.9H340L340 -5.8H341L341 -6.1H342L342 -12.5H343L343 -7.1H344L344 -9.2H345L345 -7.5H346L346 -7.0H347L347 -7.2H348L348 -5.6H349L349 -7.7H350L350 -7.0H351L351 -12.4H352L352 -12.4H353L353 -6.3H354L354 -6.1H355L355 -8.0H356L356 -6.5H357L357 -8.8H358L358 -6.5H359L359 -14.5H360L360 -7.8H361L361 -8.3H362L362 -11.6H363L363 -13.7H364L364 -9.1H365L365 -8.5H366L366 -11.0H367L367 -9.1H368L368 -15.2H369L369 -8.1H370L370 -14.6H371L371 -15.8H372L372 -9.7H373L373 -9.2H374L374 -11.0H375L375 -11.9H376L376 -8.7H377L377 -10.2H378L378 -11.7H379L379 -13.4H380L380 -9.7H381L381 -8.4H382L382 -13.7H383L383 -11.7H384L384 -8.7H385L385 -14.9H386L386 -8.2H387L387 -9.2H388L388 -8.6H389L389 -13.2H390L390 -8.2H391L391 -9.5H392L392 -9.0H393L393 -12.1H394L394 -9.5H395L395 -15.2H396L396 -7.9H397L397 -7.9H398L398 -7.9H399L399 -9.4H400L400 -8.2H401L401 -9.2H402L402 -8.5H403L403 -11.9H404L404 -7.5H405L405 -9.0H406L406 -8.7H407L407 -7.7H408L408 -12.5H409L409 -7.7H410L410 -10.6H411L411 -8.4H412L412 -8.3H413L413 -8.2H414L414 -7.6H415L415 -15.2H416L416 -8.1H417L417 -8.9H418L418 -8.7H419L419 -9.0H420L420 -9.5H421L421 -8.6H422L422 -9.6H423L423 -9.3H424L424 -8.5H425L425 -12.9H426L426 -10.1H427L427 -8.5H428L428 -9.3H429L429 -9.5H430L430 -9.8H431L431 -8.7H432L432 -10.7H433L433 -11.0H434L434 -9.6H435L435 -11.0H436L436 -14.4H437L437 -9.6H438L438 -10.7H439L439 -17.1H440L440 -9.9H441L441 -11.8H442L442 -14.2H443L443 -17.3H444L444 -16.6H445L445 -17.2H446L446 -12.6H447L447 -10.6H448L448 -14.7H449L449 -10.6H450L450 -17.2H451L451 -11.1H452L452 -13.8H453L453 -10.7H454L454 -10.2H455L455 -10.6H456L456 -16.0H457L457 -11.8H458L458 -11.7H459L459 -11.4H460L460 -16.6H461L461 -10.7H462L462 -9.9H463L463 -11.1H464L464 -10.8H465L465 -10.7H466L466 -9.4H467L467 -11.6H468L468 -15.7H469L469 -13.3H470L470 -12.3H471L471 -14.5H472L472 -8.7H473L473 -9.0H474L474 -9.9H475L475 -8.3H476L476 -13.8H477L477 -9.3H478L478 -8.2H479L479 -12.4H480L480 -16.4H481L481 -9.8H482L482 -8.9H483L483 -10.9H484L484 -8.1H485L485 -8.0H486L486 -9.5H487L487 -14.8H488L488 -12.8H489L489 -14.8H490L490 -8.3H491L491 -11.9H492L492 -14.5H493L493 -9.6H494L494 -8.4H495L495 -10.8H496L496 -9.8H497L497 -9.2H498L498 -9.0H499L499 -8.7H500L500 -12.9H501L501 -10.4H502L502 -8.6H503L503 -13.1H504L504 -9.1H505L505 -10.0H506L506 -9.0H507L507 -15.2H508L508 -13.7H509L509 -9.8H510L510 -17.5H511L511 -17.6H512L512 -16.1H513L513 -15.7H514L514 -10.4H515L515 -9.3H516L516 -10.8H517L517 -10.6H518L518 -9.2H519L519 -12.4H520L520 -10.1H521L521 -10.8H522L522 -13.0H523L523 -8.7H524L524 -9.7H525L525 -12.6H526L526 -8.5H527L527 -13.9H528L528 -11.6H529L529 -13.3H530L530 -10.3H531L531 -9.6H532L532 -9.6H533L533 -9.4H534L534 -12.1H535L535 -11.7H536L536 -8.3H537L537 -7.8H538L538 -7.8H539L539 -9.2H540L540 -7.0H541L541 -7.1H542L542 -8.0H543L543 -7.9H544L544 -6.7H545L545 -14.1H546L546 -11.6H547L547 -11.3H548L548 -8.4H549L549 -12.0H550L550 -7.2H551L551 -12.1H552L552 -6.6H553L553 -8.6H554L554 -7.7H555L555 -10.2H556L556 -10.5H557L557 -6.3H558L558 -7.4H559L559 -8.0H560L560 -8.0H561L561 -11.1H562L562 -6.5H563L563 -7.4H564L564 -11.2H565L565 -6.6H566L566 -8.4H567L567 -8.4H568L568 -6.5H569L569 -13.5H570L570 -8.3H571L571 -8.3H572L572 -13.2H573L573 -7.9H574L574 -7.2H575L575 -7.6H576L576 -9.3H577L577 -13.8H578L578 -8.5H579L579 -8.3H580L580 -15.3H581L581 -8.0H582L582 -9.4H583L583 -15.9H584L584 -8.7H585L585 -8.5H586L586 -9.2H587L587 -9.0H588L588 -11.1H589L589 -8.8H590L590 -8.7H591L591 -7.7H592L592 -11.4H593L593 -8.6H594L594 -8.5H595L595 -9.0H596L596 -12.9H597L597 -14.1H598L598 -7.8H599L599 -7.3H600L600 -8.1H601L601 -15.3H602L602 -14.2H603L603 -8.1H604L604 -8.0H605L605 -7.8H606L606 -13.7H607L607 -10.4H608L608 -6.8H609L609 -7.7H610L610 -8.8H611L611 -9.4H612L612 -7.7H613L613 -10.8H614L614 -7.4H615L615 -6.8H616L616 -10.2H617L617 -7.9H618L618 -11.2H619L619 -8.2H620L620 -8.1H621L621 -13.3H622L622 -8.1H623L623 -10.2H624L624 -13.0H625L625 -8.5H626L626 -7.4H627L627 -7.8H628L628 -8.2H629L629 -12.3H630L630 -9.0H631L631 -11.2H632L632 -12.4H633L633 -12.6H634L634 -9.0H635L635 -7.6H636L636 -12.6H637L637 -10.9H638L638 -9.7H639L639 -8.1H640L640 -9.2H641L641 -8.4H642L642 -8.3H643L643 -9.9H644L644 -15.8H645L645 -9.9H646L646 -10.9H647L647 -13.6H648L648 -11.0H649L649 -10.5H650L650 -9.8H651L651 -10.3H652L652 -9.6H653L653 -17.7H654L654 -9.6H655L655 -11.3H656L656 -18.0H657L657 -9.7H658L658 -14.1H659L659 -11.1H660L660 -11.6H661L661 -14.2H662L662 -16.5H663L663 -13.9H664L664 -15.4H665L665 -11.2H666L666 -9.9H667L667 -11.3H668L668 -15.4H669L669 -9.5H670L670 -9.9H671L671 -9.8H672L672 -10.3H673L673 -10.3H674L674 -9.9H675L675 -10.0H676L676 -12.6H677L677 -8.9H678L678 -9.9H679L679 -10.7H680L680 -10.6H681L681 -10.2H682L682 -11.8H683L683 -13.6H684L684 -11.8H685L685 -16.8H686L686 -11.9H687L687 -9.3H688L688 -9.2H689L689 -9.9H690L690 -8.5H691L691 -12.1H692L692 -9.5H693L693 -9.7H694L694 -8.5H695L695 -10.1H696L696 -10.1H697L697 -8.8H698L698 -9.7H699L699 -10.0H700L700 -9.9H701L701 -13.0H702L702 -10.3H703L703 -11.6H704L704 -10.5H705L705 -9.5H706L706 -10.7H707L707 -15.0H708L708 -9.8H709L709 -17.8H710L710 -10.1H711L711 -12.2H712L712 -10.2H713L713 -10.9H714L714 -13.7H715L715 -10.9H716L716 -13.6H717L717 -12.9H718L718 -11.8H719L719 -9.9H720L720 -10.2H721L721 -11.9H722L722 -14.3H723L723 -9.7H724L724 -15.0H725L725 -13.6H726L726 -12.5H727L727 -11.0H728L728 -10.6H729L729 -11.0H730L730 -9.6H731L731 -11.3H732L732 -14.0H733L733 -10.7H734L734 -9.5H735L735 -13.8H736L736 -11.0H737L737 -10.0H738L738 -12.5H739L739 -10.5H740L740 -9.5H741L741 -8.6H742L742 -9.1H743L743 -12.0H744L744 -9.2H745L745 -10.0H746L746 -9.4H747L747 -9.6H748L748 -8.1H749L749 -9.7H750L750 -12.5H751L751 -7.7H752L752 -9.1H753L753 -8.5H754L754 -8.1H755L755 -9.0H756L756 -14.3H757L757 -7.7H758L758 -12.5H759L759 -8.1H760L760 -8.9H761L761 -6.8H762L762 -11.5H763L763 -14.2H764L764 -12.8H765L765 -13.7H766L766 -10.1H767L767 -9.9H768L768 -8.8H769L769 -10.3H770L770 -10.1H771L771 -8.2H772L772 -7.3H773L773 -7.0H774L774 -7.2H775L775 -13.8H776L776 -15.9H777L777 -9.4H778L778 -8.8H779L779 -8.0H780L780 -7.3H781L781 -8.6H782L782 -7.7H783L783 -11.0H784L784 -11.6H785L785 -12.9H786L786 -9.8H787L787 -8.8H788L788 -16.8H789L789 -13.2H790L790 -9.1H791L791 -14.8H792L792 -11.9H793L793 -8.7H794L794 -8.4H795L795 -14.6H796L796 -8.9H797L797 -7.9H798L798 -11.6H799L799 -10.8H800L800 -9.1H801L801 -13.1H802L802 -8.9H803L803 -12.1H804L804 -7.8H805L805 -10.5H806L806 -8.1H807L807 -11.8H808L808 -8.5H809L809 -8.8H810L810 -10.1H811L811 -8.6H812L812 -13.8H813L813 -11.0H814L814 -6.7H815L815 -7.0H816L816 -6.6H817L817 -8.0H818L818 -10.6H819L819 -7.7H820L820 -7.3H821L821 -6.4H822L822 -11.3H823L823 -12.5H824L824 -7.4H825L825 -12.1H826L826 -11.2H827L827 -11.4H828L828 -11.1H829L829 -7.4H830L830 -6.9H831L831 -7.4H832L832 -12.0H833L833 -5.9H834L834 -6.6H835L835 -13.0H836L836 -8.8H837L837 -6.5H838L838 -6.5H839L839 -8.3H840L840 -7.1H841L841 -12.9H842L842 -7.2H843L843 -7.1H844L844 -14.5H845L845 -9.1H846L846 -7.9H847L847 -7.7H848L848 -9.0H849L849 -9.1H850L850 -9.4H851L851 -8.4H852L852 -9.9H853L853 -9.8H854L854 -13.1H855L855 -10.0H856L856 -9.2H857L857 -9.7H858L858 -9.0H859L859 -9.6H860L860 -8.9H861L861 -13.5H862L862 -9.5H863L863 -9.4H864L864 -10.6H865L865 -14.1H866L866 -9.9H867L867 -16.5H868L868 -10.7H869L869 -10.7H870L870 -8.5H871L871 -12.3H872L872 -7.3H873L873 -7.5H874L874 -7.4H875L875 -8.4H876L876 -10.8H877L877 -7.0H878L878 -10.7H879L879 -9.2H880L880 -6.9H881L881 -13.3H882L882 -7.9H883L883 -7.0H884L884 -6.1H885L885 -8.2H886L886 -11.2H887L887 -7.2H888L888 -13.2H889L889 -6.5H890L890 -6.5H891L891 -6.3H892L892 -6.4H893L893 -6.1H894L894 -5.8H895L895 -5.9H896L896 -13.1H897L897 -7.0H898L898 -5.5H899L899 -7.5H900L900 -0.5H901L901 -0.5H902L902 -10.4H903L903 -8.2H904L904 -8.5H905L905 -0.5H906L906 -0.5H907L907 -5.8H908L908 -3.4H909L909 -0.5H910L910 -0.5H911L911 -9.7H912L912 -11.7H913L913 -10.4H914L914 -0.5H915L915 -0.5H916L916 -8.7H917L917 -8.0H918L918 -0.5H919L919 -0.5H920L920 -0.5H921L921 -12.9H922L922 -11.8H923L923 -0.5H924L924 -0.5H925L925 -7.7H926L926 -8.4H927L927 -7.2H928L928 -0.5H929L929 -0.5H930L930 -11.7H931L931 -10.8H932L932 -11.3H933L933 -12.5H934L934 -10.3H935L935 -12.8H936L936 -0.5H937L937 -7.7H938L938 -4.6H939L939 4.7H938L938 6.2H937L937 0.5H936L936 12.4H935L935 10.6H934L934 11.4H933L933 10.8H932L932 12.2H931L931 9.1H930L930 0.5H929L929 0.5H928L928 9.1H927L927 9.9H926L926 7.6H925L925 0.5H924L924 0.5H923L923 9.7H922L922 13.0H921L921 0.5H920L920 0.5H919L919 0.5H918L918 7.9H917L917 8.6H916L916 0.5H915L915 0.5H914L914 12.9H913L913 12.9H912L912 11.4H911L911 0.5H910L910 0.5H909L909 3.6H908L908 5.5H907L907 0.5H906L906 0.5H905L905 8.1H904L904 8.2H903L903 11.9H902L902 0.5H901L901 0.5H900L900 7.0H899L899 4.4H898L898 7.4H897L897 7.3H896L896 7.0H895L895 8.2H894L894 11.5H893L893 6.4H892L892 6.5H891L891 6.9H890L890 6.8H889L889 6.2H888L888 7.4H887L887 8.2H886L886 11.5H885L885 8.1H884L884 14.0H883L883 8.5H882L882 9.9H881L881 7.5H880L880 10.1H879L879 7.1H878L878 7.7H877L877 7.8H876L876 7.4H875L875 8.2H874L874 12.4H873L873 7.1H872L872 7.7H871L871 7.5H870L870 10.7H869L869 11.1H868L868 10.5H867L867 16.6H866L866 9.1H865L865 10.9H864L864 9.1H863L863 8.7H862L862 10.6H861L861 9.3H860L860 9.5H859L859 15.0H858L858 10.3H857L857 9.1H856L856 15.4H855L855 12.0H854L854 9.1H853L853 9.4H852L852 9.6H851L851 7.8H850L850 14.2H849L849 7.8H848L848 9.3H847L847 7.9H846L846 7.7H845L845 8.1H844L844 12.2H843L843 13.9H842L842 8.7H841L841 7.5H840L840 8.4H839L839 9.7H838L838 6.5H837L837 6.3H836L836 10.0H835L835 6.1H834L834 12.2H833L833 7.2H832L832 7.5H831L831 9.6H830L830 8.8H829L829 6.2H828L828 12.5H827L827 7.6H826L826 6.1H825L825 10.4H824L824 10.6H823L823 10.1H822L822 6.1H821L821 6.4H820L820 6.5H819L819 7.4H818L818 7.8H817L817 6.4H816L816 9.1H815L815 11.9H814L814 11.1H813L813 16.5H812L812 10.3H811L811 8.5H810L810 8.3H809L809 7.3H808L808 16.8H807L807 7.3H806L806 10.0H805L805 9.0H804L804 9.6H803L803 7.8H802L802 9.3H801L801 7.7H800L800 9.2H799L799 9.8H798L798 8.2H797L797 9.6H796L796 8.4H795L795 16.4H794L794 9.8H793L793 14.5H792L792 10.5H791L791 8.3H790L790 17.8H789L789 12.5H788L788 16.0H787L787 8.1H786L786 13.7H785L785 10.6H784L784 9.5H783L783 9.2H782L782 7.9H781L781 12.9H780L780 7.5H779L779 9.9H778L778 15.6H777L777 9.0H776L776 7.1H775L775 7.0H774L774 9.9H773L773 10.9H772L772 13.0H771L771 12.1H770L770 7.8H769L769 13.3H768L768 14.1H767L767 7.0H766L766 11.7H765L765 8.4H764L764 8.2H763L763 7.0H762L762 7.7H761L761 6.7H760L760 8.0H759L759 10.2H758L758 8.3H757L757 6.8H756L756 11.1H755L755 8.4H754L754 7.9H753L753 15.0H752L752 15.0H751L751 9.0H750L750 8.9H749L749 10.2H748L748 8.0H747L747 7.8H746L746 9.5H745L745 9.0H744L744 8.1H743L743 13.8H742L742 10.0H741L741 8.7H740L740 15.5H739L739 15.6H738L738 10.2H737L737 8.9H736L736 16.7H735L735 16.0H734L734 11.3H733L733 9.4H732L732 12.8H731L731 13.6H730L730 17.6H729L729 10.5H728L728 16.7H727L727 11.0H726L726 11.1H725L725 10.9H724L724 11.6H723L723 10.0H722L722 10.7H721L721 9.7H720L720 9.9H719L719 11.7H718L718 9.8H717L717 9.6H716L716 15.0H715L715 17.3H714L714 11.5H713L713 12.6H712L712 10.1H711L711 10.7H710L710 15.3H709L709 16.4H708L708 9.8H707L707 16.4H706L706 15.3H705L705 11.4H704L704 13.9H703L703 15.4H702L702 14.2H701L701 11.8H700L700 10.1H699L699 9.9H698L698 10.1H697L697 9.6H696L696 12.2H695L695 10.0H694L694 8.8H693L693 9.6H692L692 9.8H691L691 8.2H690L690 9.3H689L689 14.4H688L688 13.1H687L687 9.8H686L686 8.7H685L685 9.1H684L684 10.4H683L683 13.1H682L682 14.4H681L681 12.4H680L680 9.9H679L679 13.6H678L678 13.5H677L677 8.7H676L676 9.7H675L675 15.7H674L674 9.7H673L673 9.9H672L672 11.1H671L671 9.3H670L670 11.3H669L669 18.0H668L668 10.1H667L667 17.9H666L666 15.6H665L665 9.6H664L664 10.2H663L663 9.4H662L662 14.8H661L661 16.4H660L660 10.3H659L659 10.5H658L658 17.7H657L657 11.4H656L656 11.2H655L655 11.2H654L654 10.1H653L653 10.6H652L652 10.9H651L651 11.3H650L650 11.9H649L649 12.7H648L648 14.6H647L647 8.8H646L646 13.2H645L645 14.3H644L644 11.8H643L643 10.4H642L642 8.7H641L641 12.9H640L640 13.1H639L639 11.8H638L638 9.1H637L637 13.3H636L636 8.6H635L635 9.5H634L634 8.7H633L633 9.2H632L632 7.1H631L631 7.0H630L630 8.0H629L629 13.5H628L628 6.8H627L627 6.6H626L626 13.1H625L625 11.7H624L624 7.9H623L623 8.5H622L622 10.3H621L621 7.4H620L620 13.0H619L619 8.3H618L618 8.1H617L617 7.6H616L616 11.6H615L615 7.4H614L614 12.8H613L613 10.8H612L612 11.6H611L611 11.7H610L610 6.7H609L609 13.6H608L608 7.0H607L607 7.7H606L606 8.0H605L605 8.8H604L604 13.8H603L603 7.8H602L602 9.2H601L601 8.7H600L600 8.3H599L599 8.3H598L598 13.1H597L597 9.9H596L596 11.8H595L595 8.6H594L594 7.7H593L593 8.2H592L592 8.5H591L591 9.1H590L590 11.3H589L589 8.7H588L588 8.2H587L587 8.4H586L586 9.2H585L585 13.9H584L584 14.4H583L583 14.6H582L582 11.4H581L581 13.2H580L580 8.1H579L579 8.9H578L578 8.0H577L577 7.7H576L576 9.3H575L575 7.8H574L574 12.9H573L573 13.3H572L572 10.7H571L571 11.5H570L570 10.2H569L569 13.3H568L568 6.8H567L567 6.8H566L566 7.8H565L565 8.1H564L564 6.5H563L563 14.8H562L562 11.4H561L561 6.1H560L560 11.2H559L559 6.7H558L558 12.9H557L557 6.7H556L556 6.2H555L555 12.4H554L554 8.1H553L553 7.7H552L552 7.6H551L551 7.3H550L550 12.4H549L549 6.2H548L548 14.1H547L547 11.9H546L546 6.8H545L545 6.8H544L544 6.7H543L543 14.1H542L542 11.0H541L541 10.8H540L540 7.7H539L539 11.6H538L538 7.9H537L537 10.7H536L536 9.5H535L535 15.4H534L534 9.3H533L533 9.8H532L532 9.3H531L531 8.1H530L530 9.2H529L529 10.5H528L528 9.1H527L527 8.8H526L526 8.7H525L525 8.9H524L524 9.1H523L523 9.5H522L522 10.0H521L521 9.5H520L520 16.1H519L519 13.6H518L518 13.5H517L517 9.2H516L516 10.7H515L515 11.0H514L514 9.5H513L513 14.7H512L512 9.8H511L511 10.6H510L510 9.0H509L509 10.1H508L508 13.6H507L507 9.2H506L506 9.6H505L505 15.3H504L504 10.1H503L503 14.7H502L502 10.7H501L501 8.6H500L500 9.0H499L499 9.3H498L498 8.8H497L497 8.1H496L496 10.3H495L495 14.0H494L494 10.1H493L493 8.5H492L492 9.8H491L491 9.7H490L490 8.5H489L489 11.0H488L488 9.1H487L487 14.2H486L486 7.8H485L485 8.6H484L484 8.0H483L483 12.7H482L482 14.3H481L481 13.3H480L480 9.5H479L479 12.1H478L478 10.3H477L477 9.9H476L476 9.8H475L475 10.0H474L474 8.6H473L473 10.1H472L472 15.6H471L471 10.4H470L470 13.7H469L469 10.3H468L468 12.6H467L467 9.3H466L466 9.7H465L465 10.7H464L464 14.3H463L463 13.4H462L462 12.1H461L461 14.9H460L460 10.5H459L459 9.9H458L458 15.9H457L457 16.3H456L456 11.5H455L455 10.9H454L454 13.2H453L453 12.2H452L452 13.0H451L451 15.3H450L450 11.9H449L449 12.1H448L448 16.8H447L447 11.3H446L446 10.7H445L445 10.4H444L444 15.3H443L443 9.9H442L442 13.2H441L441 15.7H440L440 9.4H439L439 9.4H438L438 10.6H437L437 9.4H436L436 10.6H435L435 11.1H434L434 9.5H433L433 10.9H432L432 9.4H431L431 9.2H430L430 9.5H429L429 10.3H428L428 10.8H427L427 8.7H426L426 8.6H425L425 9.6H424L424 8.3H423L423 9.0H422L422 9.7H421L421 13.4H420L420 9.1H419L419 9.2H418L418 7.6H417L417 10.9H416L416 7.5H415L415 15.3H414L414 11.4H413L413 11.3H412L412 13.8H411L411 12.5H410L410 10.3H409L409 8.6H408L408 8.3H407L407 7.7H406L406 14.2H405L405 9.4H404L404 8.4H403L403 13.3H402L402 9.4H401L401 7.9H400L400 8.6H399L399 9.4H398L398 13.6H397L397 10.9H396L396 9.3H395L395 9.3H394L394 14.3H393L393 9.0H392L392 15.1H391L391 9.6H390L390 9.3H389L389 8.4H388L388 8.1H387L387 9.9H386L386 8.5H385L385 8.6H384L384 8.5H383L383 12.7H382L382 8.1H381L381 14.7H380L380 10.2H379L379 8.6H378L378 8.1H377L377 14.7H376L376 12.8H375L375 8.1H374L374 8.7H373L373 14.6H372L372 14.6H371L371 17.8H370L370 12.0H369L369 7.4H368L368 7.3H367L367 7.2H366L366 14.7H365L365 7.5H364L364 8.9H363L363 6.8H362L362 10.1H361L361 7.1H360L360 6.4H359L359 12.5H358L358 7.4H357L357 6.5H356L356 7.2H355L355 12.5H354L354 6.4H353L353 7.9H352L352 6.5H351L351 6.3H350L350 5.8H349L349 6.2H348L348 7.0H347L347 6.3H346L346 6.4H345L345 6.9H344L344 6.6H343L343 7.2H342L342 11.2H341L341 10.4H340L340 10.4H339L339 7.5H338L338 7.6H337L337 7.8H336L336 11.8H335L335 8.4H334L334 12.0H333L333 8.6H332L332 11.0H331L331 7.4H330L330 6.9H329L329 13.3H328L328 8.9H327L327 7.0H326L326 8.7H325L325 7.9H324L324 9.5H323L323 9.3H322L322 8.5H321L321 8.4H320L320 7.7H319L319 8.5H318L318 14.1H317L317 9.8H316L316 8.0H315L315 8.3H314L314 13.5H313L313 9.7H312L312 9.7H311L311 16.6H310L310 8.4H309L309 9.6H308L308 10.1H307L307 9.7H306L306 14.0H305L305 12.6H304L304 14.9H303L303 8.9H302L302 9.5H301L301 12.1H300L300 8.5H299L299 8.9H298L298 13.1H297L297 10.0H296L296 8.9H295L295 14.5H294L294 13.2H293L293 14.2H292L292 8.1H291L291 7.7H290L290 9.0H289L289 9.0H288L288 8.3H287L287 8.3H286L286 8.1H285L285 10.8H284L284 7.4H283L283 7.9H282L282 12.4H281L281 10.8H280L280 8.9H279L279 11.0H278L278 7.7H277L277 7.8H276L276 14.5H275L275 8.9H274L274 13.9H273L273 14.9H272L272 8.6H271L271 7.9H270L270 15.5H269L269 7.8H268L268 8.6H267L267 11.3H266L266 11.9H265L265 8.6H264L264 10.2H263L263 8.5H262L262 8.5H261L261 17.2H260L260 13.0H259L259 9.8H258L258 11.0H257L257 17.5H256L256 14.2H255L255 10.2H254L254 10.9H253L253 12.1H252L252 9.5H251L251 10.3H250L250 11.0H249L249 11.5H248L248 8.3H247L247 7.7H246L246 7.1H245L245 6.8H244L244 7.6H243L243 9.7H242L242 10.1H241L241 10.0H240L240 12.9H239L239 7.5H238L238 7.6H237L237 7.5H236L236 6.5H235L235 8.4H234L234 8.5H233L233 11.1H232L232 8.3H231L231 7.3H230L230 8.5H229L229 7.4H228L228 13.7H227L227 16.4H226L226 14.0H225L225 18.1H224L224 12.9H223L223 18.7H222L222 12.8H221L221 12.6H220L220 17.8H219L219 13.3H218L218 16.2H217L217 12.9H216L216 12.4H215L215 9.1H214L214 10.1H213L213 15.8H212L212 10.1H211L211 8.1H210L210 9.1H209L209 11.0H208L208 13.4H207L207 14.3H206L206 9.9H205L205 12.4H204L204 13.4H203L203 8.7H202L202 8.4H201L201 8.5H200L200 9.6H199L199 13.3H198L198 11.9H197L197 14.2H196L196 8.8H195L195 9.9H194L194 9.0H193L193 10.4H192L192 15.6H191L191 17.2H190L190 8.5H189L189 13.0H188L188 8.6H187L187 10.8H186L186 9.0H185L185 8.7H184L184 13.5H183L183 8.9H182L182 17.8H181L181 13.7H180L180 13.8H179L179 10.4H178L178 12.1H177L177 8.9H176L176 9.9H175L175 8.9H174L174 10.0H173L173 9.1H172L172 15.4H171L171 10.4H170L170 15.2H169L169 9.9H168L168 10.5H167L167 9.0H166L166 9.5H165L165 12.1H164L164 10.2H163L163 11.1H162L162 10.0H161L161 15.2H160L160 14.5H159L159 12.4H158L158 9.1H157L157 9.2H156L156 11.4H155L155 14.2H154L154 7.9H153L153 8.8H152L152 17.6H151L151 10.2H150L150 8.4H149L149 13.0H148L148 8.2H147L147 12.3H146L146 6.9H145L145 6.1H144L144 6.2H143L143 7.1H142L142 6.4H141L141 9.3H140L140 5.9H139L139 7.1H138L138 6.4H137L137 7.7H136L136 7.7H135L135 7.3H134L134 14.8H133L133 7.2H132L132 7.7H131L131 15.3H130L130 14.0H129L129 13.2H128L128 11.0H127L127 8.7H126L126 7.7H125L125 7.9H124L124 7.4H123L123 7.8H122L122 13.9H121L121 7.1H120L120 9.2H119L119 7.9H118L118 14.6H117L117 7.1H116L116 7.4H115L115 7.8H114L114 12.0H113L113 8.1H112L112 12.4H111L111 13.6H110L110 16.3H109L109 14.8H108L108 10.7H107L107 8.2H106L106 8.7H105L105 8.8H104L104 8.9H103L103 10.9H102L102 13.7H101L101 8.7H100L100 9.7H99L99 8.4H98L98 12.0H97L97 8.5H96L96 7.5H95L95 9.7H94L94 7.7H93L93 8.3H92L92 9.1H91L91 9.3H90L90 8.2H89L89 7.6H88L88 9.2H87L87 7.0H86L86 13.1H85L85 7.3H84L84 7.1H83L83 8.9H82L82 13.3H81L81 12.8H80L80 6.8H79L79 11.4H78L78 9.3H77L77 9.2H76L76 8.4H75L75 7.9H74L74 6.4H73L73 6.8H72L72 7.3H71L71 7.6H70L70 6.7H69L69 10.1H68L68 9.0H67L67 7.0H66L66 5.0H65L65 3.0H64L64 0.5H63L63 0.5H62L62 7.1H61L61 0.5H60L60 0.5H59L59 16.0H58L58 14.8H57L57 14.7H56L56 0.5H55L55 0.5H54L54 0.5H53L53 13.8H52L52 11.8H51L51 12.4H50L50 11.3H49L49 12.3H48L48 12.7H47L47 12.0H46L46 13.0H45L45 10.5H44L44 11.2H43L43 0.5H42L42 0.5H41L41 0.5H40L40 0.5H39L39 15.5H38L38 14.3H37L37 14.8H36L36 0.5H35L35 0.5H34L34 0.5H33L33 0.5H32L32 0.5H31L31 12.2H30L30 13.3H29L29 12.7H28L28 0.5H27L27 0.5H26L26 0.5H25L25 11.8H24L24 0.5H23L23 0.5H22L22 0.5H21L21 10.3H20L20 11.5H19L19 12.3H18L18 0.5H17L17 0.5H16L16 13.3H15L15 10.5H14L14 0.5H13L13 12.2H12L12 11.2H11L11 12.6H10L10 14.8H9L9 11.9H8L8 0.5H7L7 11.3H6L6 8.4H5L5 9.7H4L4 10.0H3L3 9.5H2L2 8.3H1L1 8.6H0Z" fill="#6467d2"/></svg>
<!-- track panel -->
<svg class="abs" style="left:12.500px;top:157px" width="10" height="10" stroke="#000" stroke-width="1"><path d="M0.500 0.500L9 9M9 0.500L0.500 9"/></svg>
<div class="abs" style="left:29px;top:153px;font-size:13px;line-height:15px;letter-spacing:0.1px">PARAMOUN...</div>
<svg class="abs" style="left:119px;top:158px" width="12" height="8" fill="none" stroke="#000" stroke-width="1.1"><path d="M1 6.500L6 1.500L11 6.500"/></svg>
<svg class="abs" style="left:136px;top:159px" width="16" height="5"><circle cx="2" cy="2.5" r="1" fill="#000"/><circle cx="7.500" cy="2.5" r="1" fill="#000"/><circle cx="13" cy="2.5" r="1" fill="#000"/></svg>
<div class="abs pbtn" style="left:9px;top:171px;width:69px;height:18px;line-height:21px">Mute</div>
<div class="abs pbtn" style="left:82px;top:171px;width:69px;height:18px;line-height:21px">Solo</div>
<div class="abs pbtn" style="left:9px;top:193px;width:142px;height:22px;line-height:24px">Effects</div>
<svg class="abs" style="left:12px;top:216px" width="140" height="56" font-family="Liberation Sans, sans-serif" font-size="9" font-weight="bold" fill="#000">
<path d="M3.500 15.500H134.500" stroke="#c6cde2" stroke-width="2"/><path d="M3.500 45.500H134.500" stroke="#c6cde2" stroke-width="2"/>
<path d="M4 12.5v3M14 13v3M24 13v3M34 13v3M44 13v3M54 13v3M64 13v3M74 13v3M84 13v3M94 13v3M104 13v3M114 13v3M124 13v3M134 12.5v3M4 42.5v3M14 43v3M24 43v3M34 43v3M44 43v3M54 43v3M64 43v3M74 43v3M84 43v3M94 43v3M104 43v3M114 43v3M124 43v3M134 42.5v3" stroke="#c3cade" stroke-width="1"/>
<path d="M3 5.500H8M126 5.500H131M128.500 3V8" stroke="#000" stroke-width="1"/>
<text x="3" y="38.500">L</text><text x="124.500" y="38.500">R</text>
<circle cx="67.700" cy="14.900" r="5.400" fill="#fff" stroke="#000" stroke-width="1.100"/><circle cx="67.700" cy="45.100" r="5.400" fill="#fff" stroke="#000" stroke-width="1.100"/></svg>
<!-- vruler -->
<div class="abs vr b" style="top:168px">1.0</div><div class="abs vr" style="top:192px">0.5<i></i></div><div class="abs vr b" style="top:224px">0.0<i></i></div><div class="abs vr" style="top:255px">-0.5<i></i></div><div class="abs vr b" style="top:279px">-1.0</div>

<!-- bottom area -->
<div class="abs" style="left:0;top:600px;width:1164px;height:105px;background:#f1f1f1"></div>
<div class="abs" style="left:208px;top:608px;width:747px;height:2px;background:#8c8c8c"></div>
<div class="abs" style="left:0;top:617px;width:1164px;height:65px;background:#f8f8f8"></div>

<div class="abs" style="left:0;top:681px;width:1164px;height:1px;background:#e4e4e4"></div>
<div class="grip" style="left:3px;top:642px"></div>
<div class="abs bl" style="left:17px;top:629px;letter-spacing:0.500px">Tempo</div>
<div class="abs bl" style="left:83px;top:629px;letter-spacing:0.25px">Time Signature</div>
<div class="abs inp" style="left:18px;top:649px;width:41px">120</div>
<div class="abs spin" style="left:61px;top:649px"><i></i><b></b></div>
<div class="abs inp" style="left:84px;top:649px;width:31px;padding-left:6px">4</div>
<div class="abs spin" style="left:117px;top:649px"><i></i><b></b></div>
<div class="abs" style="left:138px;top:650px;font-size:16px;line-height:18px;color:#333">/</div>
<div class="abs inp" style="left:148px;top:649px;width:50px;padding-left:3px">4<svg class="abs" style="right:4px;top:7px" width="10" height="6" fill="none" stroke="#333" stroke-width="1"><path d="M0.500 0.500L5 5L9.500 0.500"/></svg></div>
<div class="grip" style="left:211px;top:642px"></div>
<div class="abs" style="left:225px;top:628.500px;width:12.500px;height:12.500px;border:1px solid #555;border-radius:3px;background:#fff"></div>
<div class="abs bl" style="left:240.500px;top:628px;letter-spacing:0.200px">Snap</div>
<div class="abs" style="left:225px;top:648px;width:150px;height:23px;border:1px solid #b8b8b8;border-bottom-color:#8a8a8a;border-radius:3px;background:#fbfbfb"><div class="abs" style="left:3px;top:3.500px;width:126px;height:15px;background:#e8e8e8;color:#777;font-size:12px;line-height:14px;padding-left:2px">1/8</div><svg class="abs" style="right:4px;top:7px" width="10" height="6" fill="none" stroke="#aaa" stroke-width="1"><path d="M0.500 0.500L5 5L9.500 0.500"/></svg></div>
<div class="grip" style="left:383px;top:642px"></div>
<div class="abs" style="left:394px;top:629px;width:230px;height:40px;background:#f8f8f8;border:1px solid #777"></div>
<div class="abs bigt" style="left:396px;top:631px;width:226px;height:36px;background:#313446"><span style="left:-3.9px">0</span><span style="left:16.5px">0</span><span style="left:41.5px">h</span><span style="left:67.4px">0</span><span style="left:87.6px">0</span><span style="left:116.6px">m</span><span style="left:144.8px">0</span><span style="left:165.4px">0</span><span style="left:189.7px">s</span></div>
<svg class="abs" style="left:613px;top:646px" width="9" height="6"><path d="M0 0H9L4.500 5.500Z" fill="#fff"/></svg>
<div class="abs" style="left:629px;top:619px;width:1px;height:60px;background:#e2e2e2"></div>
<div class="grip" style="left:636px;top:642px"></div>
<div class="abs bl" style="left:648px;top:624px;letter-spacing:0.150px">Selection</div>
<div class="abs" style="left:675px;top:646px;width:24px;height:24px;border-radius:3px;background:#e3e3e6"><svg width="24" height="24" viewBox="0 0 27 27" fill="none" stroke="#000" stroke-width="1.3" stroke-linejoin="round"><circle cx="13.500" cy="13.500" r="2.3"/><path d="M12.200 7h2.600l.4 1.800 1.500.7 1.600-1 1.800 1.800-1 1.600.7 1.500 1.800.4v2.600l-1.800.4-.7 1.500 1 1.600-1.800 1.800-1.600-1-1.500.7-.4 1.800h-2.600l-.4-1.800-1.500-.7-1.600 1-1.800-1.800 1-1.600-.7-1.500-1.800-.4v-2.600l1.800-.4.7-1.500-1-1.600 1.800-1.800 1.600 1 1.500-.7z" transform="translate(13.500 13.500) scale(0.80) translate(-13.500 -14.300)"/></svg></div>
<div class="abs selo" style="left:705px;top:623px"><div class="seli"><span style="left:-1.7px">0</span><span style="left:9.4px">0</span><span style="left:21.5px">h</span><span style="left:33.4px">0</span><span style="left:44.3px">0</span><span style="left:58.5px">m</span><span style="left:72.4px">0</span><span style="left:83.4px">0</span><span style="left:90.5px">.</span><span style="left:97.4px">0</span><span style="left:108.6px">0</span><span style="left:119.6px">0</span><span style="left:131.2px">s</span><svg class="abs" style="left:149.500px;top:7px" width="10" height="6"><path d="M0 0H9.500L4.750 5.500Z" fill="#fff"/></svg></div></div>
<div class="abs selo" style="left:705px;top:647.5px"><div class="seli"><span style="left:-1.7px">0</span><span style="left:9.4px">0</span><span style="left:21.5px">h</span><span style="left:33.4px">0</span><span style="left:44.3px">0</span><span style="left:58.5px">m</span><span style="left:72.4px">0</span><span style="left:83.4px">0</span><span style="left:90.5px">.</span><span style="left:97.4px">0</span><span style="left:108.6px">0</span><span style="left:119.6px">0</span><span style="left:131.2px">s</span><svg class="abs" style="left:149.500px;top:7px" width="10" height="6"><path d="M0 0H9.500L4.750 5.500Z" fill="#fff"/></svg></div></div>
<div class="grip" style="left:877px;top:626px"></div>
<div class="abs" style="left:886px;top:620px;width:27px;height:27px;border-radius:3px;background:#e3e3e6"><svg width="27" height="27"><path d="M7.500 6.500L20 13.300L7.500 20Z" fill="#48906a" stroke="#48906a" stroke-width="1" stroke-linejoin="round"/></svg></div>
<svg class="abs" style="left:916px;top:622px" width="142" height="24"><path d="M1.500 15.500H138.500" stroke="#c6d0e6" stroke-width="2"/><path d="M4.5 12v3M14.7 13v3M24.9 13v3M35.1 13v3M45.3 13v3M55.5 13v3M65.7 13v3M75.9 13v3M86.1 13v3M96.3 13v3M106.5 13v3M116.7 13v3M126.9 13v3M137.1 12v3" stroke="#c3cbdc"/><path d="M2 5.500H7M131.500 5.500H137.500M134.500 2.500V8.500" stroke="#000"/><circle cx="47.500" cy="15" r="5.400" fill="#fff" stroke="#000" stroke-width="1.100"/></svg>
<div class="abs" style="left:1063px;top:617px;width:2px;height:32px;background:#e4e4e4"></div>
<div class="abs" style="left:880px;top:649px;width:284px;height:1px;background:#e2e2e2"></div>
<!-- status bar -->
<div class="abs" style="left:0;top:682px;width:1164px;height:23px;background:#f1f1f1"></div>
<div class="abs" style="left:10px;top:684px;width:1px;height:19px;background:#dcdcdc"></div>
<div class="abs" style="left:181px;top:684px;width:1px;height:19px;background:#dcdcdc"></div>
<div class="abs" style="left:985px;top:684px;width:1px;height:19px;background:#dcdcdc"></div>
<div class="abs" style="left:14px;top:688px;font-size:12px;line-height:14px;letter-spacing:-0.1px">Stopped.</div>
<svg class="abs" style="left:1150px;top:693px" width="12" height="12" fill="#b8b8b8"><rect x="8" y="0" width="2" height="2"/><rect x="4" y="4" width="2" height="2"/><rect x="8" y="4" width="2" height="2"/><rect x="0" y="8" width="2" height="2"/><rect x="4" y="8" width="2" height="2"/><rect x="8" y="8" width="2" height="2"/></svg>


</div>
<!--/WIN-->
</div>
</body>
</html>
